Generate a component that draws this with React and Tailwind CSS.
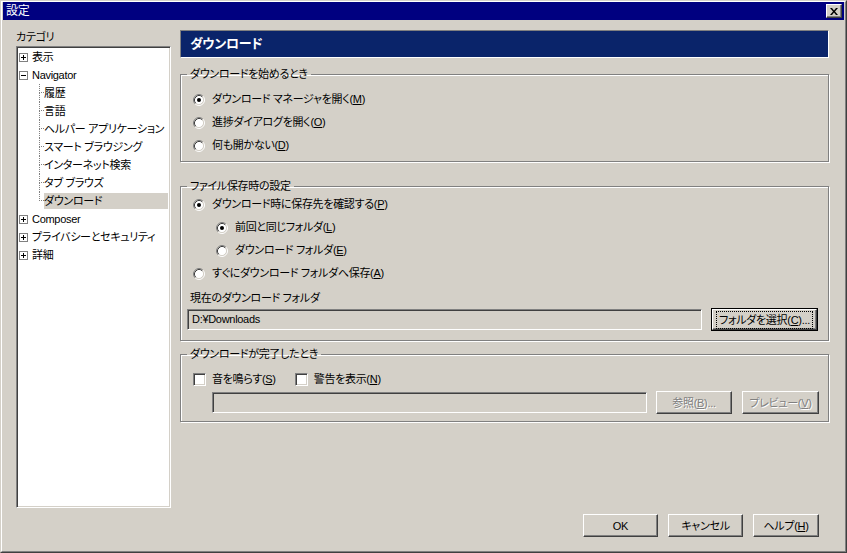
import React from "react";

const Radio = ({ checked }) => (
  <svg width="12" height="12" viewBox="0 0 12 12" className="shrink-0">
    <circle cx="6" cy="6" r="4.5" fill="#fff" />
    <path d="M2.11 9.89 A5.5 5.5 0 0 1 9.89 2.11" fill="none" stroke="#808080" />
    <path d="M9.89 2.11 A5.5 5.5 0 0 1 2.11 9.89" fill="none" stroke="#fff" />
    <path d="M2.82 9.18 A4.5 4.5 0 0 1 9.18 2.82" fill="none" stroke="#404040" />
    <path d="M9.18 2.82 A4.5 4.5 0 0 1 2.82 9.18" fill="none" stroke="#d4d0c8" />
    {checked && <circle cx="6" cy="6" r="2" fill="#000" />}
  </svg>
);

const Check = () => (
  <div className="w-[13px] h-[13px] shrink-0 bg-white border border-t-[#808080] border-l-[#808080] border-r-white border-b-white shadow-[inset_1px_1px_0_#404040,inset_-1px_-1px_0_#d4d0c8]" />
);

const Expander = ({ open }) => (
  <svg width="9" height="9" viewBox="0 0 9 9" className="shrink-0">
    <rect x="0.5" y="0.5" width="8" height="8" fill="#fff" stroke="#808080" />
    <path d="M2 4.5h5" stroke="#000" />
    {!open && <path d="M4.5 2v5" stroke="#000" />}
  </svg>
);

const Btn = ({ children, w, disabled, focused }) => (
  <div
    className={
      "h-[23px] shrink-0 " +
      w +
      (focused ? " border border-black" : "")
    }
  >
    <div className="h-full flex items-center justify-center border border-t-white border-l-white border-r-[#404040] border-b-[#404040] shadow-[inset_-1px_-1px_0_#808080]">
      <span
        className={
          "whitespace-nowrap leading-[14px] " +
          (focused ? "border border-dotted border-black px-[2px] py-px " : "") +
          (disabled
            ? "text-[#808080] [text-shadow:1px_1px_0_#fff]"
            : "text-black")
        }
      >
        {children}
      </span>
    </div>
  </div>
);

const Field = ({ w, children }) => (
  <div
    className={
      "h-[21px] shrink-0 flex items-center pl-[4px] bg-[#d4d0c8] whitespace-nowrap border border-t-[#808080] border-l-[#808080] border-r-white border-b-white shadow-[inset_1px_1px_0_#404040,inset_-1px_-1px_0_#d4d0c8] " +
      w
    }
  >
    {children}
  </div>
);

const Group = ({ title, children, className }) => (
  <fieldset
    className={
      "border border-[#808080] shadow-[inset_1px_1px_0_#fff,1px_1px_0_#fff] " +
      className
    }
  >
    <legend className="ml-[6px] px-[3px] leading-[14px] whitespace-nowrap">{title}</legend>
    {children}
  </fieldset>
);

const RadioRow = ({ checked, indent, children }) => (
  <div
    className={
      "h-[23px] flex items-center gap-[7px] whitespace-nowrap " +
      (indent ? "pl-[35px]" : "pl-[12px]")
    }
  >
    <Radio checked={checked} />
    <span>{children}</span>
  </div>
);

const TopItem = ({ label, open }) => (
  <div className="h-[18px] flex items-center pl-[1px] whitespace-nowrap">
    <Expander open={open} />
    <span className="ml-[4px] leading-[16px]">{label}</span>
  </div>
);

const ChildItem = ({ label, last, selected }) => (
  <div className="h-[18px] flex whitespace-nowrap">
    <div className="w-[21px] shrink-0" />
    <div className="w-[5px] shrink-0 flex flex-col">
      <div className="h-[9px] border-l border-b border-dotted border-[#808080]" />
      <div
        className={
          last ? "flex-1" : "flex-1 border-l border-dotted border-[#808080]"
        }
      />
    </div>
    <div
      className={
        "flex-1 flex items-center leading-[16px] h-[16px] self-center " +
        (selected ? "bg-[#d4d0c8]" : "")
      }
    >
      <span>{label}</span>
    </div>
  </div>
);

const children = [
  "履歴",
  "言語",
  "ヘルパー アプリケーション",
  "スマート ブラウジング",
  "インターネット検索",
  "タブ ブラウズ",
  "ダウンロード",
];

export default function App() {
  return (
    <div className="w-[847px] h-[553px] bg-[#d4d0c8] border border-t-[#d4d0c8] border-l-[#d4d0c8] border-r-[#404040] border-b-[#404040] text-[11px] tracking-[-0.3px] text-black font-['Liberation_Sans','Noto_Sans_CJK_JP',sans-serif] [font-feature-settings:'palt'] overflow-hidden">
      <div className="h-full flex flex-col px-px border border-t-white border-l-white border-r-[#808080] border-b-[#808080]">
        {/* title bar */}
        <div className="h-[18px] shrink-0 bg-[#000080] flex items-center justify-between">
          <span className="pl-[3px] text-white text-[12px] leading-[18px]">設定</span>
          <div className="w-[16px] h-[14px] mr-[2px] flex items-center justify-center bg-[#d4d0c8] border border-t-white border-l-white border-r-[#404040] border-b-[#404040] shadow-[inset_-1px_-1px_0_#808080]">
            <svg width="8" height="7" viewBox="0 0 8 7">
              <path d="M0 0h2l2 2.5 2-2.5h2l-3 3.5 3 3.5h-2l-2-2.5-2 2.5h-2l3-3.5z" fill="#000" />
            </svg>
          </div>
        </div>

        <div className="flex-1 flex flex-col pl-[13px] pr-[25px] pt-[10px]">
          <div className="h-[478px] flex">
            {/* left */}
            <div className="w-[155px] flex flex-col shrink-0">
              <div className="h-[16px] leading-[14px]">カテゴリ</div>
              <div className="flex-1 overflow-hidden bg-white border border-t-[#808080] border-l-[#808080] border-r-white border-b-white shadow-[inset_1px_1px_0_#404040,inset_-1px_-1px_0_#d4d0c8] p-px pr-[2px]">
                <TopItem label="表示" />
                <TopItem label="Navigator" open />
                {children.map((c, i) => (
                  <ChildItem
                    key={c}
                    label={c}
                    last={i === children.length - 1}
                    selected={i === children.length - 1}
                  />
                ))}
                <TopItem label="Composer" />
                <TopItem label="プライバシーとセキュリティ" />
                <TopItem label="詳細" />
              </div>
            </div>

            {/* right */}
            <div className="ml-[9px] w-[650px] flex flex-col">
              <div className="h-[28px] shrink-0 bg-[#0a246a] border border-t-[#808080] border-l-[#808080] border-r-white border-b-white flex items-center pl-[9px]">
                <span className="text-white font-bold text-[13px]">ダウンロード</span>
              </div>

              <Group title="ダウンロードを始めるとき" className="mt-[9px] pt-[7px] pb-[4px] w-[649px]">
                <RadioRow checked>
                  ダウンロード マネージャを開く(<u>M</u>)
                </RadioRow>
                <RadioRow>
                  進捗ダイアログを開く(<u>O</u>)
                </RadioRow>
                <RadioRow>
                  何も開かない(<u>D</u>)
                </RadioRow>
              </Group>

              <Group title="ファイル保存時の設定" className="mt-[17px] pb-[9px] w-[649px]">
                <RadioRow checked>
                  ダウンロード時に保存先を確認する(<u>P</u>)
                </RadioRow>
                <RadioRow checked indent>
                  前回と同じフォルダ(<u>L</u>)
                </RadioRow>
                <RadioRow indent>
                  ダウンロード フォルダ(<u>E</u>)
                </RadioRow>
                <RadioRow>
                  すぐにダウンロード フォルダへ保存(<u>A</u>)
                </RadioRow>
                <div className="mt-[4px] h-[18px] leading-[18px] pl-[9px]">
                  現在のダウンロード フォルダ
                </div>
                <div className="mt-[1px] h-[23px] flex items-center pl-[6px]">
                  <Field w="w-[515px]">D:¥Downloads</Field>
                  <div className="ml-[9px]">
                    <Btn w="w-[107px]" focused>
                      フォルダを選択(<u>C</u>)...
                    </Btn>
                  </div>
                </div>
              </Group>

              <Group title="ダウンロードが完了したとき" className="mt-[6px] pt-[7px] pb-[7px] w-[649px]">
                <div className="h-[23px] flex items-center pl-[12px] whitespace-nowrap">
                  <Check />
                  <span className="ml-[6px]">
                    音を鳴らす(<u>S</u>)
                  </span>
                  <div className="ml-[19px]">
                    <Check />
                  </div>
                  <span className="ml-[6px]">
                    警告を表示(<u>N</u>)
                  </span>
                </div>
                <div className="h-[23px] flex items-center pl-[31px]">
                  <Field w="w-[435px]" />
                  <div className="ml-[9px]">
                    <Btn w="w-[76px]" disabled>
                      参照(<u>B</u>)...
                    </Btn>
                  </div>
                  <div className="ml-[10px]">
                    <Btn w="w-[77px]" disabled>
                      プレビュー(<u>V</u>)
                    </Btn>
                  </div>
                </div>
              </Group>
            </div>
          </div>

          <div className="mt-[6px] flex justify-end gap-[10px]">
            <Btn w="w-[75px]">OK</Btn>
            <Btn w="w-[75px]">キャンセル</Btn>
            <Btn w="w-[66px]">
              ヘルプ(<u>H</u>)
            </Btn>
          </div>
        </div>
      </div>
    </div>
  );
}
